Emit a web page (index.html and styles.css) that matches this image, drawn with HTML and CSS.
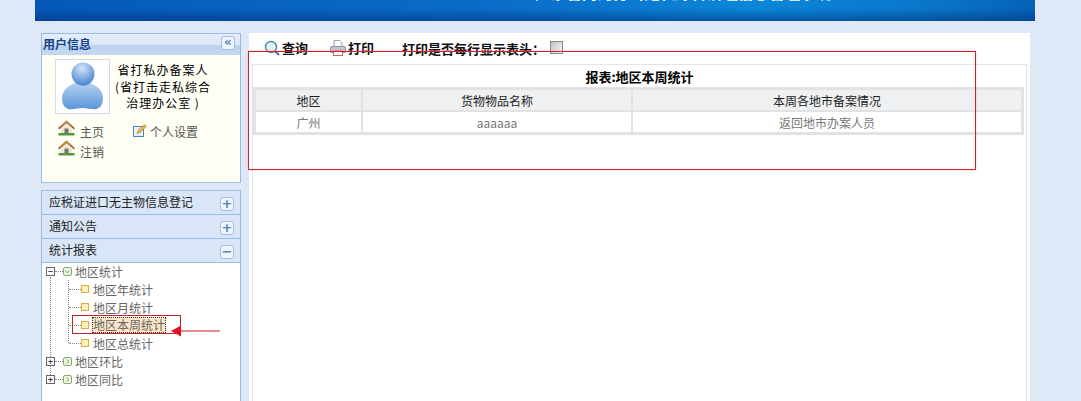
FILE: index.html
```html
<!DOCTYPE html>
<html lang="zh-CN">
<head>
    <meta charset="UTF-8">
    <title>地区本周统计</title>
    <link rel="stylesheet" href="styles.css">
</head>
<body>
    <svg class="icon-defs" width="0" height="0">
        <defs>
            <linearGradient id="avatarBody" x1="0" y1="0" x2="0" y2="1">
                <stop offset="0" stop-color="#b4d0f0"/>
                <stop offset="1" stop-color="#5a96dc"/>
            </linearGradient>
            <radialGradient id="avatarHead" cx="0.45" cy="0.25" r="0.8">
                <stop offset="0" stop-color="#d2e4f8"/>
                <stop offset="1" stop-color="#3f7fcc"/>
            </radialGradient>
            <symbol id="home" viewBox="0 0 17 16">
                <path d="M8.500 0.500 L0 8 L1 9.500 L8.500 3.500 L16 9.500 L17 8 Z" fill="#a06c34"/>
                <path d="M3 9 L8.500 4 L14 9 V13.500 H3 Z" fill="#efe8d8"/>
                <path d="M8.500 1.500 L2.500 7 L8.500 3.500 L14.500 7 Z" fill="#c89858"/>
                <rect x="6.500" y="8.500" width="4" height="5" fill="#77736a"/>
                <path d="M0.500 13 H16.500 V15.500 H0.500 Z" fill="#4f9a3e"/>
            </symbol>
            <symbol id="folder-open" viewBox="0 0 9 9">
                <rect x="0.500" y="0.500" width="8" height="8" rx="1.500" fill="#eef6e6" stroke="#7fae62"/>
                <path d="M2.500 3.500 L4.500 6 L6.500 3.500" fill="none" stroke="#7fae62"/>
            </symbol>
            <symbol id="folder-closed" viewBox="0 0 9 9">
                <rect x="0.500" y="0.500" width="8" height="8" rx="1.500" fill="#eef6e6" stroke="#7fae62"/>
                <path d="M3.500 2.500 L6 4.500 L3.500 6.500" fill="none" stroke="#7fae62"/>
            </symbol>
            <symbol id="leaf" viewBox="0 0 8 8">
                <rect x="0.500" y="0.500" width="7" height="7" fill="#fdf0b8" stroke="#e0a94a"/>
            </symbol>
        </defs>
    </svg>

    <div class="banner">
        <div class="banner-title">广东省内河打击走私综合治理信息管理系统</div>
    </div>

    <div class="layout">
        <div class="sidebar">
            <div class="user-panel">
                <div class="user-title">
                    <span>用户信息</span>
                    <span class="tool-btn collapse-btn">«</span>
                </div>
                <div class="user-body">
                    <div class="user-top">
                        <div class="avatar">
                            <svg width="45" height="49" viewBox="0 0 45 49">
                                <path d="M4 44 C-3 30 10 22 16 21 H29 C35 22 48 30 41 44 C36 50 30 46 22.500 46 C15 46 9 50 4 44 Z" fill="url(#avatarBody)"/>
                                <circle cx="23" cy="12" r="11.500" fill="url(#avatarHead)"/>
                            </svg>
                        </div>
                        <div class="user-name">
                            省打私办备案人<br>(省打击走私综合<br>治理办公室 )
                        </div>
                    </div>
                    <div class="user-links">
                        <a class="user-link link-home"><svg width="17" height="16"><use href="#home"/></svg>主页</a>
                        <a class="user-link link-setting">
                            <svg width="14" height="14" viewBox="0 0 14 14">
                                <rect x="0.500" y="2.500" width="10" height="10" fill="#eaf3fb" stroke="#4a86b8"/>
                                <path d="M4 9.500 L5 6.500 L11.500 0.500 L13.500 2.500 L7 8.500 Z" fill="#e8b64c" stroke="#a87a24" stroke-width="0.600"/>
                            </svg>个人设置</a>
                        <a class="user-link link-logout"><svg width="17" height="16"><use href="#home"/></svg>注销</a>
                    </div>
                </div>
            </div>

            <div class="nav-panel">
                <div class="nav-head">
                    <span>应税证进口无主物信息登记</span>
                    <span class="tool-btn">+</span>
                </div>
                <div class="nav-head">
                    <span>通知公告</span>
                    <span class="tool-btn">+</span>
                </div>
                <div class="nav-head">
                    <span>统计报表</span>
                    <span class="tool-btn">−</span>
                </div>
                <div class="tree">
                    <div class="tree-row">
                        <span class="expander">−</span><span class="dash"></span>
                        <svg width="9" height="9"><use href="#folder-open"/></svg>
                        <span class="node-text">地区统计</span>
                    </div>
                    <div class="tree-children">
                        <div class="tree-row child">
                            <span class="child-dash"></span><svg width="8" height="8"><use href="#leaf"/></svg>
                            <span class="node-text">地区年统计</span>
                        </div>
                        <div class="tree-row child">
                            <span class="child-dash"></span><svg width="8" height="8"><use href="#leaf"/></svg>
                            <span class="node-text">地区月统计</span>
                        </div>
                        <div class="tree-row child">
                            <span class="child-dash"></span><svg width="8" height="8"><use href="#leaf"/></svg>
                            <span class="node-text selected">地区本周统计</span>
                        </div>
                        <div class="tree-row child">
                            <span class="child-dash"></span><svg width="8" height="8"><use href="#leaf"/></svg>
                            <span class="node-text">地区总统计</span>
                        </div>
                    </div>
                    <div class="tree-row">
                        <span class="expander">+</span><span class="dash"></span>
                        <svg width="9" height="9"><use href="#folder-closed"/></svg>
                        <span class="node-text">地区环比</span>
                    </div>
                    <div class="tree-row">
                        <span class="expander">+</span><span class="dash"></span>
                        <svg width="9" height="9"><use href="#folder-closed"/></svg>
                        <span class="node-text">地区同比</span>
                    </div>
                    <div class="tree-mark"></div>
                    <svg class="tree-arrow" width="50" height="12" viewBox="0 0 50 12">
                        <path d="M8 6 H49" stroke="#d0141c" stroke-width="1.200"/>
                        <path d="M0 6 L10 0.500 V11.500 Z" fill="#e0101c"/>
                    </svg>
                </div>
            </div>
        </div>

        <div class="main">
            <div class="toolbar">
                <a class="tool-item item-query">
                    <svg width="16" height="16" viewBox="0 0 16 16">
                        <circle cx="7" cy="7" r="5.500" fill="#e4f2f6" stroke="#3f8fa8" stroke-width="1.400"/>
                        <path d="M11 11 L15 15" stroke="#4a6fa0" stroke-width="2"/>
                    </svg>查询</a>
                <a class="tool-item item-print">
                    <svg width="16" height="16" viewBox="0 0 16 16">
                        <path d="M4 0.500 H10 L12 3 V7 H4 Z" fill="#fafafa" stroke="#9aa4b4"/>
                        <rect x="0.500" y="6.500" width="15" height="6" rx="1.500" fill="#c2c8d0" stroke="#8a94a4"/>
                        <rect x="3.500" y="11" width="9" height="4.500" fill="#f4f4f4" stroke="#c06a6a"/>
                    </svg>打印</a>
                <label class="tool-check">打印是否每行显示表头：<span class="checkbox"></span></label>
            </div>
            <div class="report">
                <div class="report-title">报表:地区本周统计</div>
                <table class="report-table">
                    <thead>
                        <tr>
                            <th class="col-area">地区</th>
                            <th class="col-name">货物物品名称</th>
                            <th>本周各地市备案情况</th>
                        </tr>
                    </thead>
                    <tbody>
                        <tr>
                            <td>广州</td>
                            <td>aaaaaa</td>
                            <td>返回地市办案人员</td>
                        </tr>
                    </tbody>
                </table>
            </div>
            <div class="main-mark"></div>
        </div>
    </div>
</body>
</html>
```

FILE: styles.css
```css
html, body {
    height: 100%;
}

body {
    margin: 0;
    height: 401px;
    overflow: hidden;
    background-color: #dfe8f6;
    font-family: "Noto Sans CJK SC", "Liberation Sans", sans-serif;
    font-size: 12px;
    color: #000;
}

.icon-defs {
    position: absolute;
}

svg {
    display: block;
    flex: none;
}

/* banner */
.banner {
    margin: 0 46px 0 35px;
    height: 21px;
    overflow: hidden;
    background: linear-gradient(to bottom, rgba(0, 60, 140, 0) 40%, rgba(0, 50, 120, 0.55) 100%),
        linear-gradient(to right, #0558b8 0%, #0a6cc8 45%, #0b86d8 72%, #0a78cc 88%, #0562b8 100%);
}

.banner-title {
    margin-top: -18px;
    padding-left: 500px;
    font-size: 15.600px;
    line-height: 20px;
    font-weight: bold;
    color: #fff;
    white-space: nowrap;
}

/* layout */
.layout {
    display: flex;
    gap: 8px;
    margin: 12px 51px 0 41px;
    height: 368px;
}

.sidebar {
    width: 200px;
    flex: none;
    display: flex;
    flex-direction: column;
    gap: 7px;
}

/* user panel */
.user-panel {
    height: 150px;
    box-sizing: border-box;
    border: 1px solid #99bbe8;
    background-color: #fffff6;
}

.user-title {
    height: 21px;
    box-sizing: border-box;
    display: flex;
    align-items: center;
    justify-content: space-between;
    padding: 0 5px 3px 1px;
    background: linear-gradient(to bottom, #e6eefa 0%, #dbe6f6 50%, #bcd0ee 52%, #c6d8f2 100%);
    font-weight: bold;
    color: #15428b;
}

.tool-btn {
    width: 12px;
    height: 12px;
    border: 1px solid #a8c0e0;
    border-radius: 2px;
    background-color: #eef4fc;
    color: #5b84b8;
    font-family: "DejaVu Sans", sans-serif;
    font-size: 13px;
    font-weight: bold;
    line-height: 11px;
    text-align: center;
}

.collapse-btn {
    font-size: 12px;
}

.user-top {
    display: flex;
    padding: 4px 0 0 13px;
}

.avatar {
    width: 53px;
    height: 53px;
    flex: none;
    display: flex;
    align-items: center;
    justify-content: center;
    border: 1px solid #d4dde6;
    background-color: #fff;
}

.user-name {
    width: 100px;
    margin: 3px 0 0 3px;
    line-height: 16.500px;
    letter-spacing: 1px;
    text-align: center;
    white-space: nowrap;
}

.user-links {
    display: grid;
    grid-template-columns: 75px auto;
    justify-content: start;
    row-gap: 4px;
    margin: 6px 0 0 16px;
}

.user-link {
    display: flex;
    align-items: flex-start;
    height: 16px;
    color: #555;
    line-height: 24px;
}

.link-home svg,
.link-logout svg {
    margin-right: 5px;
}

.link-setting svg {
    margin: 4px 3px 0 0;
}

/* nav */
.nav-panel {
    flex: 1;
    border: 1px solid #99bbe8;
    border-bottom: none;
    background-color: #fff;
}

.nav-head {
    height: 23px;
    box-sizing: content-box;
    display: flex;
    align-items: center;
    justify-content: space-between;
    padding: 0 6px 0 7px;
    border-bottom: 1px solid #99bbe8;
    background-color: #d9e6f8;
    color: #222;
}

.nav-head > span:first-child {
    margin-top: -2px;
}

.nav-head .tool-btn {
    margin-top: 3px;
}

/* tree */
.tree {
    position: relative;
    margin-top: -1px;
}

.tree::before {
    content: "";
    position: absolute;
    left: 8px;
    top: 15px;
    height: 100px;
    border-left: 1px dotted #888;
}

.tree-row {
    position: relative;
    display: flex;
    align-items: center;
    height: 18px;
    padding-left: 4px;
    color: #666;
}

.expander {
    width: 7px;
    height: 7px;
    flex: none;
    border: 1px solid #666;
    background-color: #fff;
    color: #222;
    font-family: "DejaVu Sans Mono", monospace;
    font-size: 9px;
    line-height: 7px;
    text-align: center;
}

.dash {
    width: 8px;
    flex: none;
    border-top: 1px dotted #888;
}

.node-text {
    margin-left: 2px;
    padding: 0 1px;
}

.tree-children {
    position: relative;
    margin-left: 26px;
}

.tree-children::before {
    content: "";
    position: absolute;
    left: 0;
    top: 0;
    height: 63px;
    border-left: 1px dotted #888;
}

.tree-row.child {
    padding-left: 1px;
}

.tree-row.child .node-text {
    margin-left: 3px;
}

.child-dash {
    width: 12px;
    flex: none;
    border-top: 1px dotted #888;
}

.tree-row.child .node-text.selected {
    border: 1px dotted #333;
    line-height: 14px;
    background-color: #fde6c8;
    padding: 0;
    margin-left: 3px;
}

.tree-mark {
    position: absolute;
    left: 30px;
    top: 53px;
    width: 107px;
    height: 17px;
    border: 1px solid #c0202c;
}

.tree-arrow {
    position: absolute;
    left: 129px;
    top: 63px;
}

/* main */
.main {
    position: relative;
    width: 781px;
    flex: none;
    background-color: #fff;
    display: flex;
    flex-direction: column;
}

.toolbar {
    height: 31px;
    display: flex;
    align-items: center;
    padding: 0 0 0 15px;
    font-size: 13px;
    font-weight: bold;
    color: #111;
}

.tool-item {
    display: flex;
    align-items: center;
    gap: 2px;
    margin-top: -2px;
}

.item-query {
    margin-right: 22px;
}

.item-print {
    margin-right: 28px;
}

.tool-check {
    display: flex;
    align-items: center;
    margin-top: -1px;
}

.checkbox {
    width: 11px;
    height: 11px;
    margin: -2px 0 0 5px;
    border: 1px solid #888;
    background: linear-gradient(to bottom right, #c0c0c0, #fafafa);
}

.report {
    flex: 1;
    margin: 0 3px;
    border: 1px solid #e2e6ea;
    border-bottom: none;
}

.report-title {
    height: 22px;
    line-height: 24px;
    font-size: 13px;
    text-align: center;
    font-weight: bold;
}

.report-table {
    width: 771px;
    border-collapse: collapse;
    table-layout: fixed;
    border: 3px solid #e2e2e2;
}

.report-table th,
.report-table td {
    height: 20px;
    padding: 0;
    border: 2px solid #e2e2e2;
    text-align: center;
    font-weight: normal;
}

.report-table th {
    background-color: #eef0f2;
    color: #222;
}

.report-table td {
    color: #777;
}

.col-area {
    width: 105px;
}

.col-name {
    width: 268px;
}

.main-mark {
    position: absolute;
    left: -1px;
    top: 18px;
    width: 726px;
    height: 117px;
    border: 1px solid #d0202c;
    box-shadow: 0 0 2px rgba(255, 120, 130, 0.5);
}
```
